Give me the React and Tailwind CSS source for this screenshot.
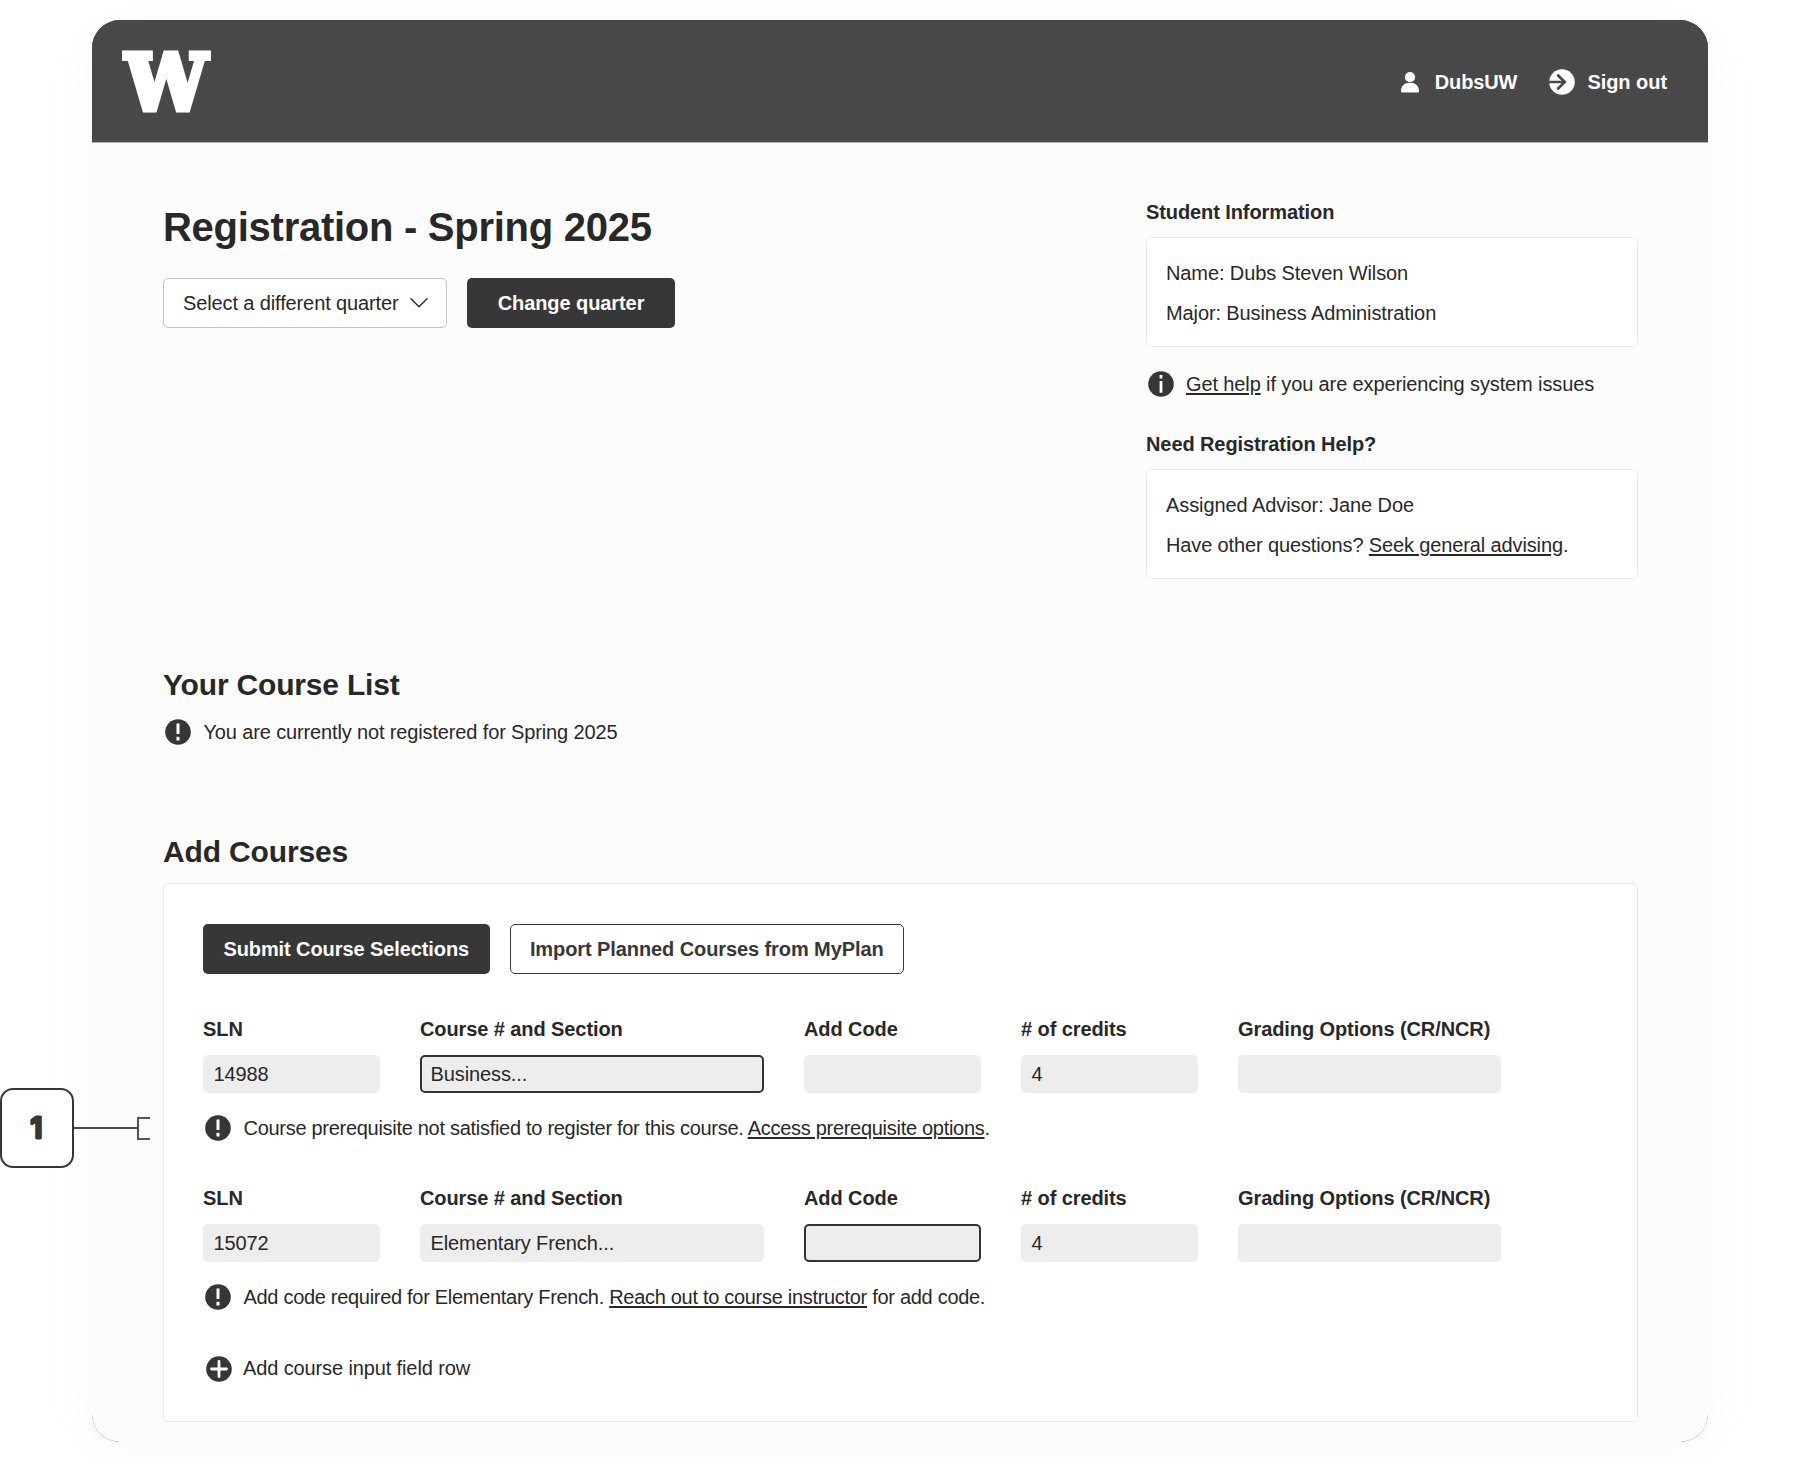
import React from 'react';
import clsx from 'clsx';

const courses = [
  {
    sln: '14988',
    section: 'Business...',
    addCode: '',
    credits: '4',
    grading: '',
    invalid: 'section',
    message: (
      <span className="tracking-[-0.29px]">
        Course prerequisite not satisfied to register for this course.{' '}
        <Link>Access prerequisite options</Link>.
      </span>
    ),
  },
  {
    sln: '15072',
    section: 'Elementary French...',
    addCode: '',
    credits: '4',
    grading: '',
    invalid: 'addCode',
    message: (
      <span className="tracking-[-0.3px]">
        Add code required for Elementary French.{' '}
        <Link>Reach out to course instructor</Link> for add code.
      </span>
    ),
  },
];

const fields = [
  { key: 'sln', label: 'SLN', width: 'w-[177px]' },
  { key: 'section', label: 'Course # and Section', width: 'w-[344px]' },
  { key: 'addCode', label: 'Add Code', width: 'w-[177px]' },
  { key: 'credits', label: '# of credits', width: 'w-[177px]' },
  { key: 'grading', label: 'Grading Options (CR/NCR)', width: 'w-[263px]' },
];

function Link({ children }) {
  return (
    <a href="#" className="underline decoration-[1.5px] underline-offset-2">
      {children}
    </a>
  );
}

function Logo() {
  return (
    <svg width="90" height="62" viewBox="0 0 90 62" className="mt-[2px] overflow-visible" role="img">
      <text
        x="0"
        y="0"
        transform="translate(3.5 58.8) scale(0.955 1)"
        fill="#fff"
        stroke="#fff"
        strokeWidth="6"
        className="font-['DejaVu_Serif',serif] font-bold text-[76.2px]"
      >
        W
      </text>
    </svg>
  );
}

function UserIcon() {
  return (
    <svg width="18" height="21" viewBox="0 0 18 21" fill="#fff">
      <circle cx="9" cy="5.2" r="5.1" />
      <path d="M0 19.2C0 14.2 3.4 10.8 9 10.8s9 3.4 9 8.4c0 .8-.4 1.2-1.2 1.2H1.2C.4 20.4 0 20 0 19.2Z" />
    </svg>
  );
}

function SignOutIcon() {
  return (
    <svg width="26" height="26" viewBox="0 0 26 26" fill="none">
      <circle cx="13" cy="13" r="12.8" fill="#fff" />
      <path d="M0 13h15.5M9.2 6.5l6.6 6.5-6.6 6.5" stroke="#484848" strokeWidth="2.6" strokeLinecap="round" />
    </svg>
  );
}

function AlertIcon() {
  return (
    <svg width="26" height="26" viewBox="0 0 26 26" className="shrink-0">
      <circle cx="13" cy="13" r="12.8" fill="#363636" />
      <rect x="11.5" y="4.5" width="3" height="10.5" fill="#fff" />
      <rect x="11.5" y="17.8" width="3" height="3.7" fill="#fff" />
    </svg>
  );
}

function InfoIcon() {
  return (
    <svg width="26" height="26" viewBox="0 0 26 26" className="shrink-0">
      <circle cx="13" cy="13" r="12.8" fill="#363636" />
      <rect x="11.6" y="4" width="2.8" height="3.5" fill="#fff" />
      <rect x="11.6" y="10" width="2.8" height="11.7" fill="#fff" />
    </svg>
  );
}

function PlusIcon() {
  return (
    <svg width="26" height="26" viewBox="0 0 26 26" className="shrink-0">
      <circle cx="13" cy="13" r="12.8" fill="#363636" />
      <path d="M13 5.5v15M5.500 13h15" stroke="#fff" strokeWidth="2.8" strokeLinecap="round" />
    </svg>
  );
}

function Header() {
  return (
    <header className="flex h-[122px] items-center justify-between rounded-t-[28px] bg-[#484848] pl-[30px] pr-[41px] text-white font-bold">
      <Logo />
      <div className="mt-[2px] flex items-center">
        <UserIcon />
        <span className="ml-4 tracking-[-0.1px]">DubsUW</span>
        <span className="ml-8 mr-3">
          <SignOutIcon />
        </span>
        <span className="tracking-[-0.05px]">Sign out</span>
      </div>
    </header>
  );
}

function InfoBox({ title, children }) {
  return (
    <div>
      <h3 className="font-bold tracking-[-0.09px]">{title}</h3>
      <div className="mt-[13.5px] h-[110px] rounded-[5px] border border-[#ebebeb] bg-white px-[19px] py-[15px] leading-[40px]">
        {children}
      </div>
    </div>
  );
}

function CourseRow({ course }) {
  return (
    <div>
      <div className="flex gap-10">
        {fields.map((field) => (
          <div key={field.key} className={field.width}>
            <div className="font-bold whitespace-nowrap tracking-[-0.09px]">{field.label}</div>
            <div
              className={clsx(
                'mt-[13.5px] h-[38px] rounded-[5px] border-2 bg-[#ededed] px-[8.5px] py-[5px] tracking-[-0.1px]',
                course.invalid === field.key ? 'border-[#333]' : 'border-[#ededed]'
              )}
            >
              {course[field.key]}
            </div>
          </div>
        ))}
      </div>
      <div className="mt-[22.5px] flex items-center gap-[12.5px] pl-[2px]">
        <AlertIcon />
        {course.message}
      </div>
    </div>
  );
}

// Numbered marker that points at the course messages
function Callout() {
  return (
    <div className="absolute left-0 top-[1088px] flex items-center">
      <div className="flex h-[80px] w-[74px] items-center justify-center rounded-[13px] border-2 border-[#363636] bg-white">
        <svg width="40" height="44" viewBox="0 0 40 44">
          <text
            x="19.5"
            y="31.5"
            textAnchor="middle"
            fill="#363636"
            stroke="#363636"
            strokeWidth="3"
            strokeLinejoin="round"
            className="font-['Inter',sans-serif] font-semibold text-[28px]"
          >
            1
          </text>
        </svg>
      </div>
      <div className="h-[2px] w-[63px] bg-[#484848]" />
      <div className="h-[23px] w-[13px] border-2 border-r-0 border-[#555]" />
    </div>
  );
}

export default function App() {
  return (
    <div className="relative h-[1462px] w-[1801px] overflow-hidden bg-white pl-[92px] pt-[20px] font-['Liberation_Sans',Arial,sans-serif] text-[20px] leading-[24px] text-[#282828]">
      <div className="h-[1422px] w-[1616px] rounded-[28px] bg-[#484848] shadow-[0_10px_40px_rgba(190,220,255,0.14)]">
        <Header />
        <main className="h-[1300px] rounded-b-[28px] border-t border-[#b5b5b5] bg-[#fcfcfc] pl-[71px] pr-[70px]">
          <div className="flex justify-between pt-[56.5px]">
            <section className="pt-[3.5px]">
              <h1 className="text-[40px] leading-[48px] font-bold tracking-[-0.27px]">
                Registration - Spring 2025
              </h1>
              <div className="mt-[27px] flex gap-5">
                <button className="flex h-[50px] w-[284px] items-center rounded-[5px] border border-[#c4c4c4] bg-white pl-[19px]">
                  <span className="tracking-[-0.12px]">Select a different quarter</span>
                  <svg width="18" height="10" viewBox="0 0 18 10" fill="none" className="ml-[11px]">
                    <path d="M1 .8l8 8 8-8" stroke="#282828" strokeWidth="1.4" strokeLinecap="round" strokeLinejoin="round" />
                  </svg>
                </button>
                <button className="h-[50px] w-[208px] rounded-[5px] bg-[#373737] font-bold tracking-[-0.08px] text-white">
                  Change quarter
                </button>
              </div>
            </section>

            <aside className="w-[492px]">
              <InfoBox title="Student Information">
                <p className="tracking-[-0.1px]">Name: Dubs Steven Wilson</p>
                <p className="tracking-[-0.11px]">Major: Business Administration</p>
              </InfoBox>
              <div className="mt-[23.5px] mb-[35px] flex items-center gap-3 pl-[2px]">
                <InfoIcon />
                <span className="tracking-[-0.12px]">
                  <Link>Get help</Link> if you are experiencing system issues
                </span>
              </div>
              <InfoBox title="Need Registration Help?">
                <p className="tracking-[-0.08px]">Assigned Advisor: Jane Doe</p>
                <p className="tracking-[-0.13px]">
                  Have other questions? <Link>Seek general advising</Link>.
                </p>
              </InfoBox>
            </aside>
          </div>

          <section className="mt-[88px]">
            <h2 className="text-[30px] leading-[36px] font-bold tracking-[-0.18px]">Your Course List</h2>
            <div className="mt-[16px] flex items-center gap-[13px] pl-[1.5px]">
              <AlertIcon />
              <span className="tracking-[-0.14px]">You are currently not registered for Spring 2025</span>
            </div>
          </section>

          <section className="mt-[88.5px]">
            <h2 className="text-[30px] leading-[36px] font-bold tracking-[-0.15px]">Add Courses</h2>
            <div className="mt-[13.5px] h-[539px] w-[1475px] rounded-[5px] border border-[#ebebeb] bg-white px-[39px] pt-[39.5px]">
              <div className="flex gap-5 font-bold tracking-[-0.09px]">
                <button className="h-[50px] w-[286.5px] rounded-[5px] bg-[#373737] text-white">
                  Submit Course Selections
                </button>
                <button className="h-[50px] w-[394.5px] rounded-[5px] border-[1.5px] border-[#373737] bg-white text-[#373737]">
                  Import Planned Courses from MyPlan
                </button>
              </div>
              <div className="mt-[43.5px] flex flex-col gap-[45px]">
                {courses.map((course) => (
                  <CourseRow key={course.sln} course={course} />
                ))}
              </div>
              <div className="mt-[45.5px] flex items-center gap-[11px] pl-[3px]">
                <PlusIcon />
                <span className="-mt-[2px] tracking-[-0.12px]">Add course input field row</span>
              </div>
            </div>
          </section>
        </main>
      </div>
      <Callout />
    </div>
  );
}
